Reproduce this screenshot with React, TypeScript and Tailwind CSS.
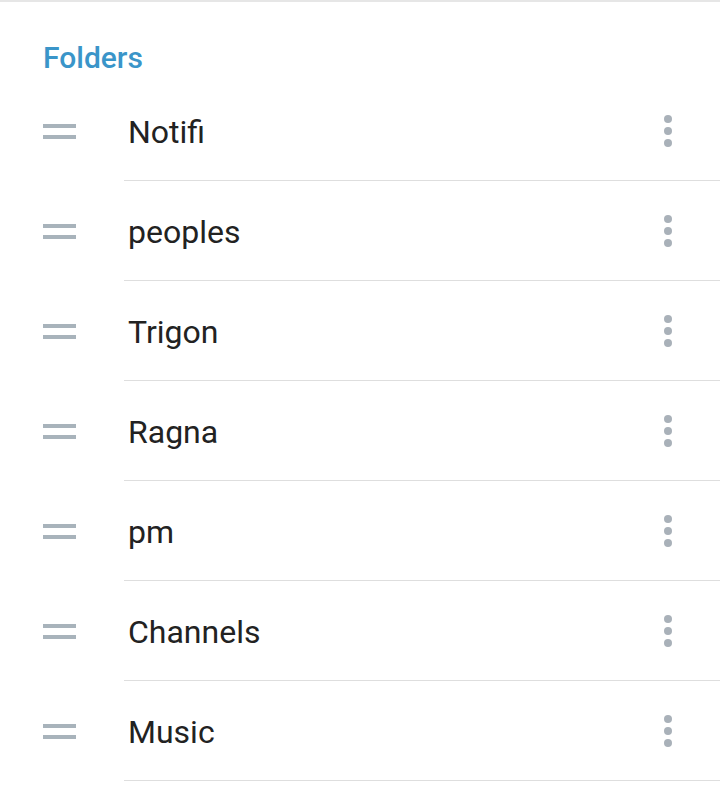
import React from "react";

const items = ["Notifi", "peoples", "Trigon", "Ragna", "pm", "Channels", "Music"];

function Handle() {
  return (
    <div className="flex w-[33px] flex-col gap-[7px]">
      <div className="h-[4px] w-full bg-[#a8b3bb]" />
      <div className="h-[4px] w-full bg-[#a8b3bb]" />
    </div>
  );
}

function Dots() {
  return (
    <div className="flex flex-col items-center gap-[4px]">
      <div className="h-[8px] w-[8px] rounded-full bg-[#a9b1b9]" />
      <div className="h-[8px] w-[8px] rounded-full bg-[#a9b1b9]" />
      <div className="h-[8px] w-[8px] rounded-full bg-[#a9b1b9]" />
    </div>
  );
}

export default function App() {
  return (
    <div
      className="w-[720px] h-[802px] bg-white border-t-2 border-[#e6e6e6] overflow-hidden"
      style={{ fontFamily: "Roboto, 'Liberation Sans', sans-serif" }}
    >
      <div className="h-[79px] pl-[43px] pt-[36px]">
        <div className="text-[30px] leading-[40px] font-medium text-[#3a95c9]">Folders</div>
      </div>
      {items.map((name) => (
        <div key={name} className="flex h-[100px] items-stretch">
          <div className="flex w-[124px] shrink-0 items-center pl-[43px]">
            <Handle />
          </div>
          <div className="flex flex-1 items-center border-b-[1.5px] border-[#dedede] pl-[4px] pr-[48px]">
            <div className="flex-1 pt-[3px] text-[32px] text-[#222222]">{name}</div>
            <Dots />
          </div>
        </div>
      ))}
    </div>
  );
}
